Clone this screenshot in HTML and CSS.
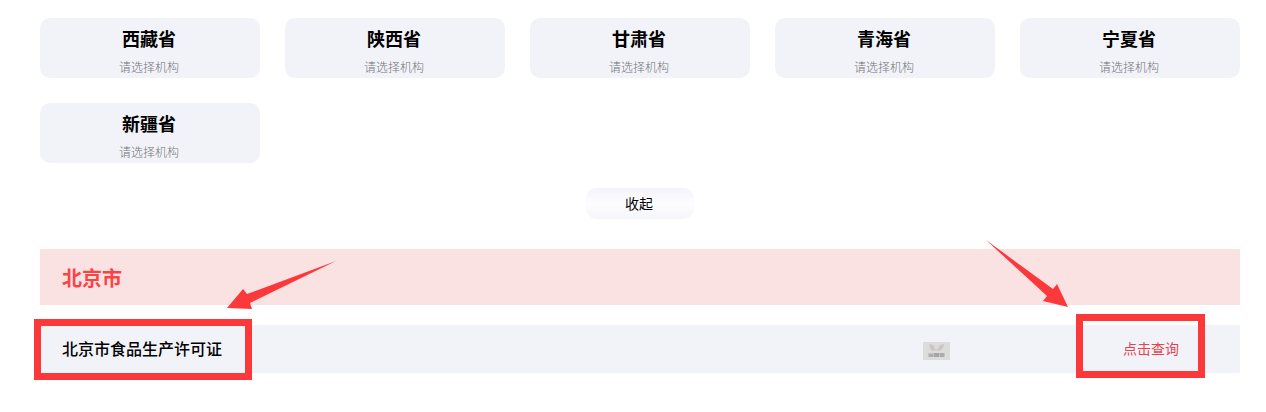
FILE: index.html
```html
<!DOCTYPE html>
<html lang="zh-CN">
<head>
<meta charset="utf-8">
<meta name="viewport" content="width=device-width, initial-scale=1">
<title>许可证查询</title>
<link rel="stylesheet" href="styles.css">
</head>
<body>
<main class="page">
  <div class="regions">
    <button class="region" type="button"><span class="region-name">西藏省</span><span class="region-hint">请选择机构</span></button>
    <button class="region" type="button"><span class="region-name">陕西省</span><span class="region-hint">请选择机构</span></button>
    <button class="region" type="button"><span class="region-name">甘肃省</span><span class="region-hint">请选择机构</span></button>
    <button class="region" type="button"><span class="region-name">青海省</span><span class="region-hint">请选择机构</span></button>
    <button class="region" type="button"><span class="region-name">宁夏省</span><span class="region-hint">请选择机构</span></button>
    <button class="region" type="button"><span class="region-name">新疆省</span><span class="region-hint">请选择机构</span></button>
  </div>
  <button class="collapse" type="button">收起</button>
  <section class="results">
    <h2 class="results-title">北京市</h2>
    <div class="result">
      <span class="result-name">北京市食品生产许可证</span>
      <svg class="thumb" viewBox="0 0 27 18" aria-hidden="true">
        <rect width="27" height="18" fill="#dcdcdc"/>
        <path d="M6 2 L10 3 L13 6 L17 3 L21 2 L20 6 L17 9 L13 8 L9 9 L7 6 Z" fill="#cdc5c1"/>
        <path d="M10 3 L13 6 L17 3 L15 7 L12 7 Z" fill="#e2dedb"/>
        <rect x="5" y="11" width="17" height="4" fill="#c4c4c4"/>
        <rect x="6" y="12" width="4" height="3" fill="#aeaeae"/>
        <rect x="11" y="11" width="5" height="4" fill="#a6a6a6"/>
        <rect x="17" y="11" width="4" height="4" fill="#acacac"/>
      </svg>
      <a class="result-link" href="#">点击查询</a>
      <span class="mark mark-name"></span>
      <span class="mark mark-link"></span>
    </div>
    <svg class="arrow arrow-name" viewBox="0 0 109 48" aria-hidden="true"><path d="M0 47 L16 28 L20 33 L109 0 L23 42 L25 48 Z"/></svg>
    <svg class="arrow arrow-link" viewBox="0 0 82 68" aria-hidden="true"><path d="M0 0 L67 49 L71 44 L82 67 L57 61 L61 56 Z"/></svg>
  </section>
</main>
</body>
</html>
```
FILE: styles.css
```css
* { box-sizing: border-box; }

body {
  margin: 0;
  background: #fff;
  color: #000;
  font-family: "Noto Sans CJK SC", sans-serif;
}

.page {
  display: flex;
  flex-direction: column;
  padding: 18px 26px 32px 40px;
}

.regions {
  display: grid;
  grid-template-columns: repeat(5, 1fr);
  gap: 25px;
}

.region {
  display: flex;
  flex-direction: column;
  align-items: center;
  gap: 6px;
  height: 60px;
  padding: 7px 2px 0 0;
  border: 0;
  border-radius: 10px;
  background: #f2f3f9;
  color: #000;
  font-family: inherit;
}

.region-name {
  font-size: 18px;
  font-weight: 700;
  line-height: 26px;
}

.region-hint {
  color: #747478;
  font-size: 12px;
  font-weight: 300;
  line-height: 20px;
}

.collapse {
  align-self: center;
  width: 108px;
  height: 31px;
  margin: 25px 0 30px;
  padding: 0 2px 2px 0;
  border: 0;
  border-radius: 10px;
  background: linear-gradient(#f3f4fa, #fdfdff 50%, #f5f6fb);
  color: #000;
  font-family: inherit;
  font-size: 14px;
}

.results { position: relative; }

.results-title {
  margin: 0 0 20px;
  padding: 15px 22px 13px;
  background: #fbe2e2;
  color: #fb4347;
  font-size: 20px;
  font-weight: 700;
  line-height: 28px;
}

.result {
  position: relative;
  display: flex;
  align-items: center;
  height: 48px;
  padding: 0 61px 2px 22px;
  background: #f2f3f9;
}

.result-name {
  flex: 1;
  font-size: 16px;
  font-weight: 500;
}

.thumb {
  width: 27px;
  height: 18px;
  margin: 6px 173px 0 0;
}

.result-link {
  color: #e8424d;
  font-size: 14px;
  text-decoration: none;
}

/* Callouts drawn over the result row */
.mark {
  position: absolute;
  border: 7px solid #fc393a;
  pointer-events: none;
}

.mark-name {
  top: -6px;
  left: -6px;
  width: 218px;
  height: 61px;
}

.mark-link {
  top: -11px;
  right: 35px;
  width: 129px;
  height: 64px;
}

.arrow {
  position: absolute;
  fill: #fc393a;
  pointer-events: none;
}

.arrow-name {
  top: 12px;
  left: 187px;
  width: 109px;
  height: 48px;
}

.arrow-link {
  top: -9px;
  right: 172px;
  width: 82px;
  height: 68px;
}
```
